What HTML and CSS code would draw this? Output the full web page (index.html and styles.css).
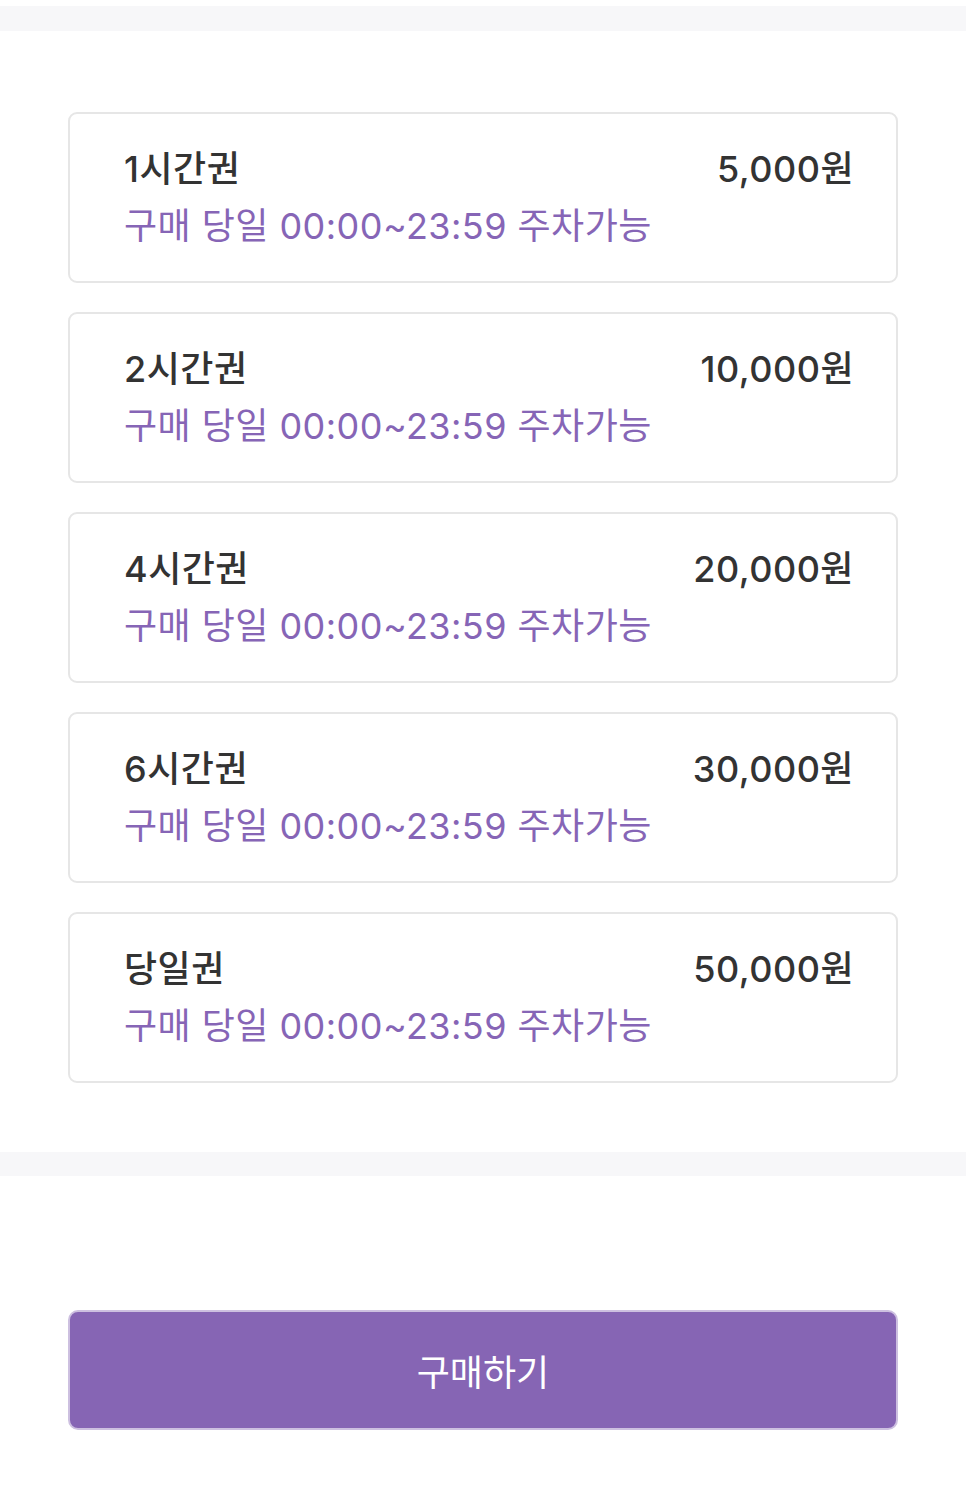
FILE: index.html
```html
<!DOCTYPE html>
<html lang="ko">
<head>
  <meta charset="UTF-8">
  <meta name="viewport" content="width=device-width, initial-scale=1.0">
  <link rel="stylesheet" href="styles.css">
  <title>주차권 구매</title>
</head>
<body>
  <div class="band band_top"></div>
  <div class="tickets">
    <div class="ticket">
      <div class="ticket_row">
        <span class="ticket_name">1시간권</span>
        <span class="ticket_price">5,000원</span>
      </div>
      <div class="ticket_desc">구매 당일 00:00~23:59 주차가능</div>
    </div>
    <div class="ticket">
      <div class="ticket_row">
        <span class="ticket_name">2시간권</span>
        <span class="ticket_price">10,000원</span>
      </div>
      <div class="ticket_desc">구매 당일 00:00~23:59 주차가능</div>
    </div>
    <div class="ticket">
      <div class="ticket_row">
        <span class="ticket_name">4시간권</span>
        <span class="ticket_price">20,000원</span>
      </div>
      <div class="ticket_desc">구매 당일 00:00~23:59 주차가능</div>
    </div>
    <div class="ticket">
      <div class="ticket_row">
        <span class="ticket_name">6시간권</span>
        <span class="ticket_price">30,000원</span>
      </div>
      <div class="ticket_desc">구매 당일 00:00~23:59 주차가능</div>
    </div>
    <div class="ticket">
      <div class="ticket_row">
        <span class="ticket_name">당일권</span>
        <span class="ticket_price">50,000원</span>
      </div>
      <div class="ticket_desc">구매 당일 00:00~23:59 주차가능</div>
    </div>
  </div>
  <div class="band"></div>
  <div class="actions">
    <button class="buy_btn" type="button">구매하기</button>
  </div>
</body>
</html>
```

FILE: styles.css
```css
* {
  box-sizing: border-box;
}

body {
  margin: 0;
  padding-top: 6px;
  background: #fff;
  font-family: Inter, "Noto Sans CJK KR", sans-serif;
  color: #333;
}

.band {
  height: 24px;
  background: #f7f7f9;
}

.band_top {
  height: 25px;
}

.tickets {
  display: flex;
  flex-direction: column;
  gap: 29px;
  padding: 81px 68px 69px;
}

.ticket {
  height: 171px;
  padding: 33px 42px 33px 54px;
  border: 2px solid #e6e6e6;
  border-radius: 9px;
  background: #fff;
}

.ticket_row {
  display: flex;
  justify-content: space-between;
  align-items: center;
  height: 44px;
  margin-bottom: 13px;
}

.ticket_name,
.ticket_price {
  font-size: 36px;
  font-weight: 500;
  line-height: 44px;
  letter-spacing: 0.5px;
  color: #333;
}

.ticket_desc {
  font-size: 36px;
  line-height: 44px;
  letter-spacing: 0.45px;
  color: #8665b6;
}

.actions {
  padding: 134px 68px 75px;
}

.buy_btn {
  display: block;
  width: 100%;
  height: 120px;
  border: 2px solid #cdc0e0;
  border-radius: 10px;
  background: #8665b4;
  color: #fff;
  font-family: inherit;
  font-size: 36px;
}
```
